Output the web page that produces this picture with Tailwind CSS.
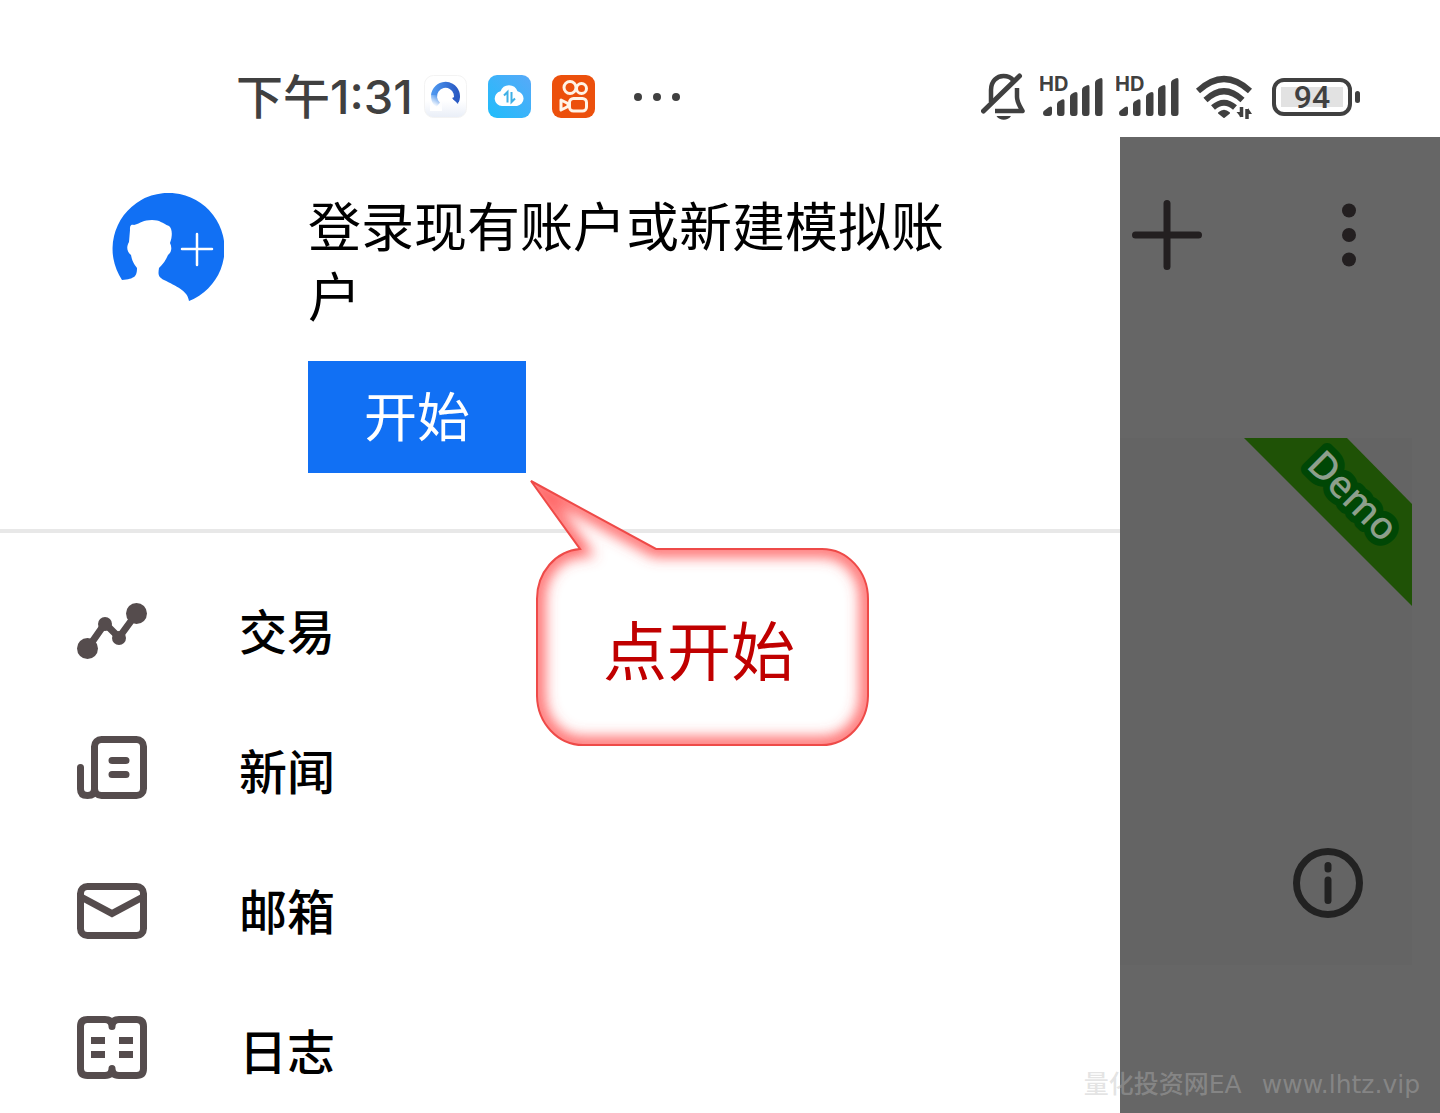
<!DOCTYPE html>
<html lang="zh-CN">

<head>
    <meta charset="UTF-8" />
    <meta name="viewport" content="width=device-width, initial-scale=1.0" />
    <title>登录现有账户或新建模拟账户</title>
    <script src="https://cdn.jsdelivr.net/npm/@tailwindcss/browser@4"></script>
</head>

<body class="relative h-screen overflow-hidden flex flex-col bg-white text-black font-['Noto_Sans_CJK_SC',sans-serif]">
    <!-- status bar -->
    <header class="flex shrink-0 items-center justify-between h-[137px] pt-14 pl-[236px] pr-20 text-[#404040]">
        <div class="flex items-center">
            <span class="w-[188px] text-[47px] leading-none font-medium whitespace-nowrap font-['Inter','Noto_Sans_CJK_SC',sans-serif]">下午1:31</span>
            <div class="flex items-center gap-[21px]">
                <svg class="size-[43px]" viewBox="0 0 43 43">
                    <defs>
                        <linearGradient id="tile" x1="0" y1="0" x2="0" y2="1"><stop offset=".6" stop-color="#fff" /><stop offset="1" stop-color="#e9eef7" /></linearGradient>
                        <linearGradient id="ring" x1="0" y1="0" x2="1" y2="0"><stop offset="0" stop-color="#4c95ee" /><stop offset="1" stop-color="#2a5bc4" /></linearGradient>
                        <linearGradient id="fade" x1=".7" y1="0" x2=".3" y2="1"><stop offset="0" stop-color="#fff" stop-opacity="0" /><stop offset=".7" stop-color="#fff" /></linearGradient>
                    </defs>
                    <rect x=".5" y=".5" width="42" height="42" rx="9" fill="url(#tile)" stroke="#f3f3f3" />
                    <path d="M14 30A11.500 11.500 0 1 1 32 26" fill="none" stroke="url(#ring)" stroke-width="6" />
                    <path d="M28 23L35.500 20L34 29Z" fill="#2a5bc4" />
                    <path d="M6 20H18V36H6Z" fill="url(#fade)" />
                </svg>
                <svg class="size-[43px]" viewBox="0 0 43 43">
                    <defs>
                        <linearGradient id="sky" x1="0" y1="1" x2="1" y2="0"><stop offset="0" stop-color="#1fbdfb" /><stop offset="1" stop-color="#58a9f8" /></linearGradient>
                    </defs>
                    <rect width="43" height="43" rx="9" fill="url(#sky)" />
                    <path d="M14 31a7.500 7.500 0 0 1-1.500-14.800a9 9 0 0 1 17 0A7.500 7.500 0 0 1 29 31Z" fill="#fff" />
                    <path d="M16 20.500L19.500 17V27.500M23.500 17V27L27 23.500" fill="none" stroke="#3fb0e6" stroke-width="2" />
                </svg>
                <svg class="size-[43px]" viewBox="0 0 43 43" fill="none" stroke="#fff3e6" stroke-width="3">
                    <rect width="43" height="43" rx="9" fill="#ec500c" stroke="none" />
                    <circle cx="18" cy="12.500" r="6" />
                    <circle cx="29.500" cy="13.500" r="5" />
                    <rect x="17.500" y="23.500" width="17" height="12.500" rx="4" />
                    <path d="M9 25L16 28.500V31.500L9 35Z" stroke-linejoin="round" />
                </svg>
            </div>
            <svg class="ml-9 w-[54px] h-3" viewBox="0 0 54 12" fill="#404040">
                <circle cx="7" cy="6" r="4" />
                <circle cx="26" cy="6" r="4" />
                <circle cx="45" cy="6" r="4" />
            </svg>
        </div>

        <div class="flex items-center">
            <!-- muted bell -->
            <svg class="w-[45px] h-12" viewBox="0 0 45 48" fill="none" stroke="#404040" stroke-width="4.500">
                <path d="M10 29V17C10 8 16 3 22.500 3C27 3 30 4.500 32 7" />
                <path d="M2.500 38L38.500 3" stroke-width="5" stroke-linecap="round" />
                <path d="M36 15V24C36 29 38 32 41.500 38H14" stroke-linejoin="round" />
                <path d="M15.500 43H30C27 48 18.500 48 15.500 43Z" fill="#404040" stroke="none" />
            </svg>
            <div class="ml-3.5 flex gap-[13px]">
                <svg class="w-[63px] h-12" viewBox="0 -1 63 48" fill="#404040">
                    <text x="-1" y="17" font-family="Inter, sans-serif" font-weight="700" font-size="20">HD</text>
                    <path d="M3 39Q3 37 5 36L9 33Q12 31.500 12 34V39Q12 42 9 42H6Q3 42 3 39Z" />
                    <path d="M17 30Q17 28.500 18.500 27.500L22 25.500Q24.500 24.500 24.500 27V39Q24.500 42 22 42H19.500Q17 42 17 39Z" />
                    <path d="M30 23Q30 21 31.500 20L34 18.500Q37.500 17 37.500 20V39Q37.500 42 35 42H32.500Q30 42 30 39Z" />
                    <path d="M42 16Q42 14 43.500 13L46.500 11.500Q49.500 10 49.500 13V39Q49.500 42 47 42H44.500Q42 42 42 39Z" />
                    <path d="M55 9Q55 7 56.500 6L59.500 4.500Q62.500 3 62.500 6V39Q62.500 42 60 42H57.500Q55 42 55 39Z" />
                </svg>
                <svg class="w-[63px] h-12" viewBox="0 -1 63 48" fill="#404040">
                    <text x="-1" y="17" font-family="Inter, sans-serif" font-weight="700" font-size="20">HD</text>
                    <path d="M3 39Q3 37 5 36L9 33Q12 31.500 12 34V39Q12 42 9 42H6Q3 42 3 39Z" />
                    <path d="M17 30Q17 28.500 18.500 27.500L22 25.500Q24.500 24.500 24.500 27V39Q24.500 42 22 42H19.500Q17 42 17 39Z" />
                    <path d="M30 23Q30 21 31.500 20L34 18.500Q37.500 17 37.500 20V39Q37.500 42 35 42H32.500Q30 42 30 39Z" />
                    <path d="M42 16Q42 14 43.500 13L46.500 11.500Q49.500 10 49.500 13V39Q49.500 42 47 42H44.500Q42 42 42 39Z" />
                    <path d="M55 9Q55 7 56.500 6L59.500 4.500Q62.500 3 62.500 6V39Q62.500 42 60 42H57.500Q55 42 55 39Z" />
                </svg>
            </div>
            <svg class="ml-4 w-[60px] h-12" viewBox="0 0 60 48" fill="none" stroke="#404040" stroke-width="6" stroke-linejoin="round">
                <path d="M3 18Q29 -6 55 18" />
                <path d="M10.500 27Q29 9.500 47.500 27" />
                <path d="M18 34.500Q29 25 40 34.500" />
                <path d="M24 40Q29 35.500 34 40L29 44Z" fill="#404040" stroke-width="2" />
                <path d="M46.500 34V44M52 46V36" stroke-width="3.500" />
                <path d="M41.500 39H46V44.500ZM57 41H53V35Z" fill="#404040" stroke="none" />
            </svg>
            <div class="ml-[17px] flex items-center gap-[3px]">
                <div class="w-20 h-[38px] p-[5px] rounded-xl border-4 border-[#404040]">
                    <div class="h-full flex items-center justify-center bg-[#e2e2e2] text-[32px] leading-none font-medium font-['Roboto',sans-serif]">94</div>
                </div>
                <div class="w-[5px] h-3 rounded-full bg-[#404040]"></div>
            </div>
        </div>
    </header>

    <div class="flex flex-1 min-h-0">
        <!-- drawer -->
        <div class="flex-1 min-w-0">
            <section class="flex items-start h-[396px] pt-[52px] pl-28 pr-[140px] border-b-4 border-[#e8e8e8]">
                <svg class="mt-1 size-28 shrink-0" viewBox="0 0 112 112">
                    <path d="M10 87A56 56 0 1 1 77 108C76 98 64 93 52 87C46 84 46 81 47 75C51 71 54 67 56 62C60 59 60 54 58 50C61 42 60 35 57 33C50 30 48 27 40 27C31 27 29 30 22 32C18 31 18 34 18 37L17 49C14 54 15 59 19 62C20 68 22 71 25 75C25 83 23 86 10 87Z" fill="#1170f4" />
                    <path d="M70 56H100M85 41V72" stroke="#fff" stroke-width="2.500" stroke-linecap="round" />
                </svg>
                <div class="ml-[84px] flex-1">
                    <h1 class="text-[53px] leading-[70px]">登录现有账户或新建模拟账户</h1>
                    <button type="button" class="mt-8 h-28 px-14 pb-1.5 bg-[#1170f4] text-[53px] leading-none text-white">开始</button>
                </div>
            </section>

            <nav class="flex flex-col pt-7 pl-[77px]">
                <a href="#trade" class="flex items-center gap-[92px] h-[140px] text-[48px] leading-none font-medium">
                    <svg class="size-[70px]" viewBox="0 0 70 70" fill="#554c4d">
                        <path d="M10.500 52.500L28 27.500L42 41.500L59.500 17.500" fill="none" stroke="#554c4d" stroke-width="7" />
                        <circle cx="10.500" cy="52.500" r="10.500" />
                        <circle cx="28" cy="28" r="7" />
                        <circle cx="42" cy="42" r="7" />
                        <circle cx="59.500" cy="17.500" r="10.500" />
                    </svg>
                    <span class="pb-1">交易</span>
                </a>
                <a href="#news" class="flex items-center gap-[92px] h-[140px] text-[48px] leading-none font-medium">
                    <svg class="size-[70px]" viewBox="0 0 70 70" fill="none" stroke="#554c4d" stroke-width="7" stroke-linecap="round">
                        <rect x="17.500" y="3.500" width="49" height="56" rx="7" />
                        <path d="M3.500 31.500V53Q3.500 59.500 10.500 59.500Q17.500 59.500 17.500 53" />
                        <path d="M35 24.500H49M35 38.500H49" />
                    </svg>
                    <span class="pb-1">新闻</span>
                </a>
                <a href="#mail" class="flex items-center gap-[92px] h-[140px] text-[48px] leading-none font-medium">
                    <svg class="size-[70px]" viewBox="0 0 70 70" fill="none" stroke="#554c4d" stroke-width="7">
                        <rect x="3.500" y="10.500" width="63" height="49" rx="7" />
                        <path d="M5 21.500L35 37.500L65 21.500" />
                    </svg>
                    <span class="pb-1">邮箱</span>
                </a>
                <a href="#journal" class="flex items-center gap-[92px] h-[140px] text-[48px] leading-none font-medium">
                    <svg class="size-[70px]" viewBox="0 0 70 70" fill="none" stroke="#554c4d" stroke-width="7">
                        <path d="M35 10.500Q35 3.500 28 3.500H10.500Q3.500 3.500 3.500 10.500V52.500Q3.500 59.500 10.500 59.500H28Q35 59.500 35 52.500Q35 59.500 42 59.500H59.500Q66.500 59.500 66.500 52.500V10.500Q66.500 3.500 59.500 3.500H42Q35 3.500 35 10.500Z" stroke-linejoin="round" />
                        <path d="M14 24.500H28M42 24.500H56M14 38.500H28M42 38.500H56" />
                    </svg>
                    <span class="pb-1">日志</span>
                </a>
            </nav>
        </div>

        <!-- dimmed page behind the drawer -->
        <main class="w-80 shrink-0 bg-[#666666]">
            <div class="flex items-start justify-between h-[301px] pt-[63px] pl-3 pr-[84px]">
                <button type="button" aria-label="添加">
                    <svg class="size-[70px]" viewBox="0 0 70 70" stroke="#231f20" stroke-width="7" stroke-linecap="round">
                        <path d="M3.500 35H66.500M35 3.500V66.500" />
                    </svg>
                </button>
                <button type="button" aria-label="更多">
                    <svg class="w-3.5 h-[70px]" viewBox="0 0 14 70" fill="#231f20">
                        <circle cx="7" cy="10.500" r="7" />
                        <circle cx="7" cy="35" r="7" />
                        <circle cx="7" cy="59.500" r="7" />
                    </svg>
                </button>
            </div>
            <div class="flex flex-col items-end justify-between h-[527px] mr-7 pb-[47px] bg-[#646464]">
                <svg class="size-[168px] overflow-visible" viewBox="0 0 168 168">
                    <path d="M0 0H103L168 66V168Z" fill="#1f5206" />
                    <text x="109" y="58" transform="rotate(45 109 58)" dy="13" text-anchor="middle" font-family="Noto Sans, sans-serif" font-weight="500" font-size="38" fill="#8d9f8c" stroke="#004705" stroke-width="14" stroke-linejoin="round" paint-order="stroke">Demo</text>
                </svg>
                <button type="button" aria-label="信息" class="mr-[49px]">
                    <svg class="size-[70px]" viewBox="0 0 70 70" fill="none" stroke="#222222" stroke-width="7" stroke-linecap="round">
                        <circle cx="35" cy="35" r="31.500" />
                        <path d="M35 17.500V21M35 32V52.500" />
                    </svg>
                </button>
            </div>
        </main>
    </div>

    <!-- callout -->
    <div class="absolute left-[528px] top-[476px] w-[342px] h-[272px]">
        <svg class="absolute inset-0 size-full" viewBox="0 0 342 272">
            <defs>
                <path id="bubble" d="M3 5L128 73H294A46 50 0 0 1 340 123V220A46 50 0 0 1 294 269H55A46 50 0 0 1 9 220V123A46 50 0 0 1 52 73Z" />
                <clipPath id="inside"><use href="#bubble" /></clipPath>
                <filter id="soft" x="-20%" y="-20%" width="140%" height="140%"><feGaussianBlur stdDeviation="7" /></filter>
            </defs>
            <use href="#bubble" fill="#fff" />
            <g clip-path="url(#inside)">
                <use href="#bubble" fill="none" stroke="#ff5050" stroke-width="16" stroke-opacity=".85" filter="url(#soft)" />
            </g>
            <use href="#bubble" fill="none" stroke="#ee4a48" stroke-width="2" />
        </svg>
        <p class="relative pt-[70px] h-full flex items-center justify-center text-[64px] leading-none text-[#c00000]">点开始</p>
    </div>

    <!-- watermark -->
    <div class="absolute right-5 bottom-4 flex gap-5 text-[25px] leading-none font-medium text-[#b9b9b9]/40 font-['DejaVu_Sans','Noto_Sans_CJK_SC',sans-serif] whitespace-nowrap">
        <span>量化投资网EA</span>
        <span>www.lhtz.vip</span>
    </div>
</body>

</html>
